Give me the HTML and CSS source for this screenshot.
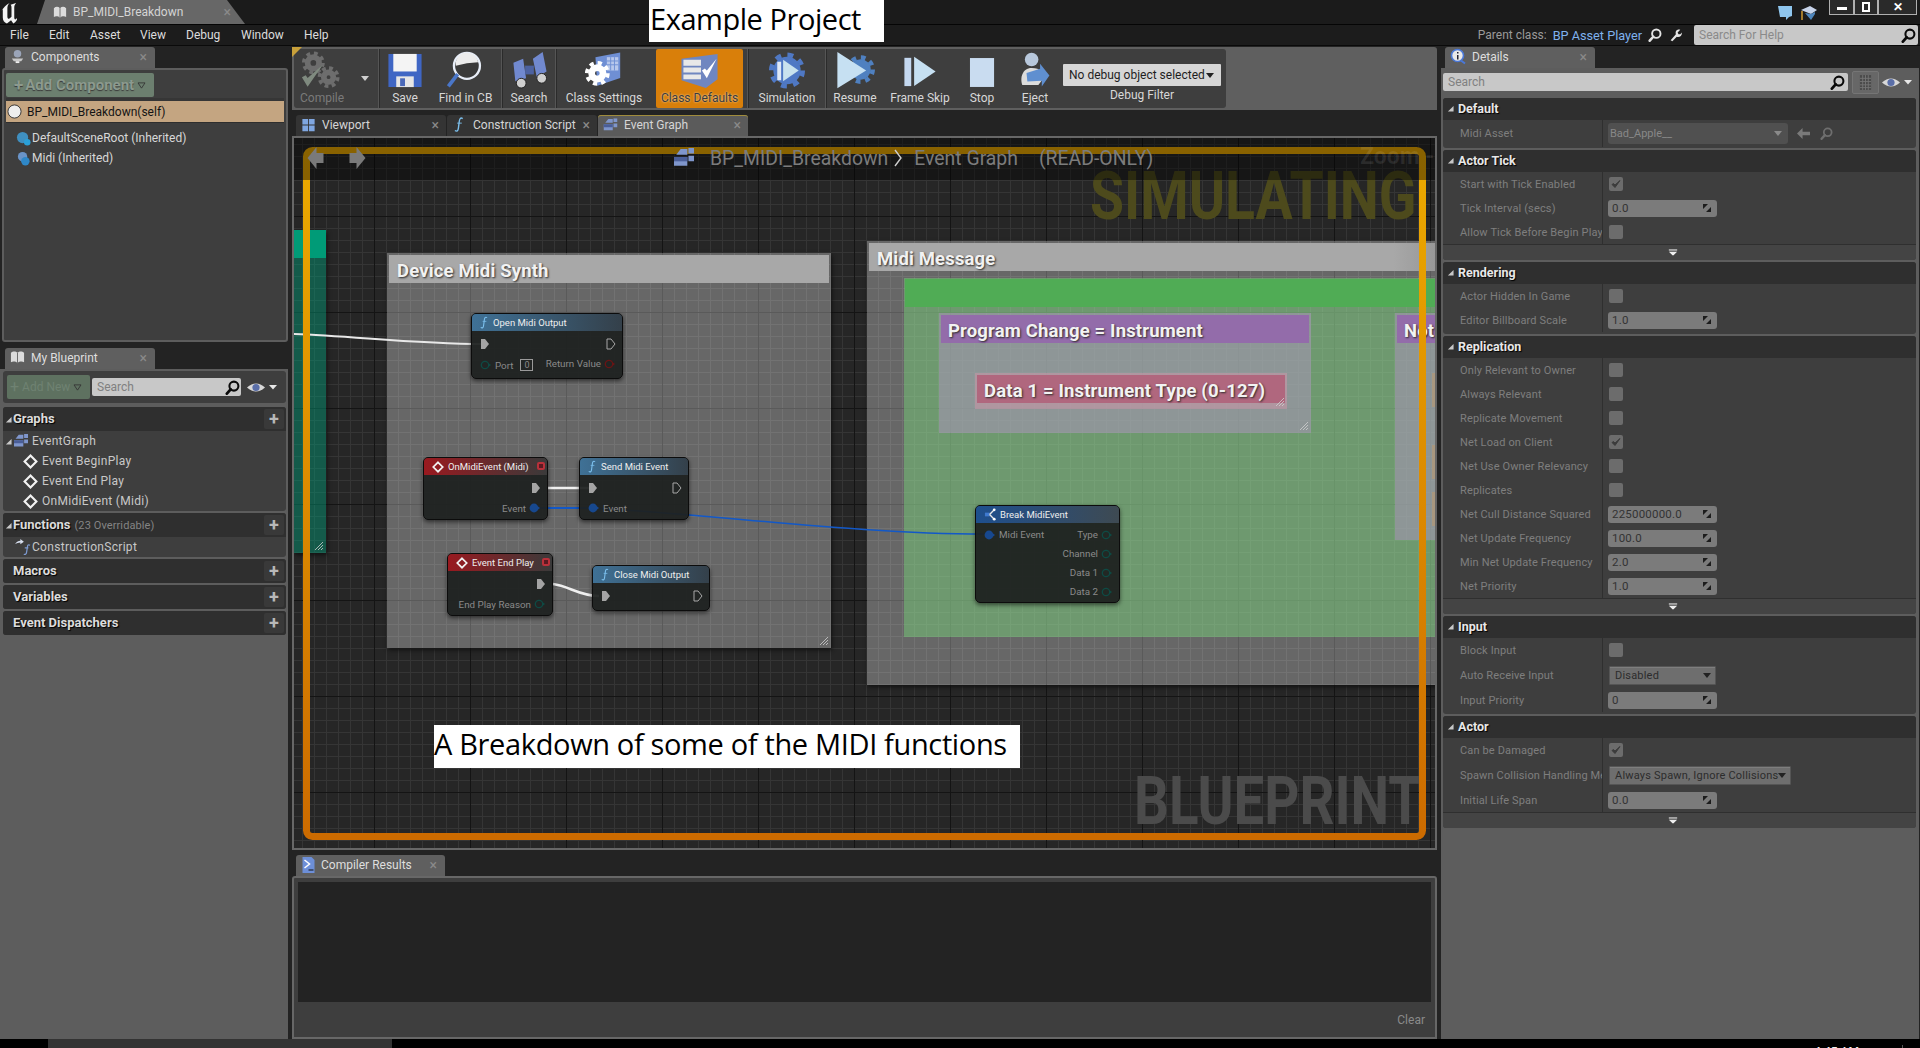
FILE: index.html
```html
<!DOCTYPE html>
<html lang="en">
<head>
<meta charset="utf-8">
<title>BP_MIDI_Breakdown</title>
<link rel="stylesheet" href="styles.css">
</head>
<body>
<svg class="defs" width="0" height="0">
  <defs>
    <linearGradient id="frame-grad" x1="0" y1="0" x2="0" y2="1"><stop offset="0" stop-color="#ecaa00"/><stop offset="1" stop-color="#cc6b00"/></linearGradient>
    <symbol id="mag" viewBox="0 0 16 16"><circle cx="9.500" cy="6.500" r="4.800" fill="none" stroke="currentColor" stroke-width="2.200"/><path d="M6 10 2 14.500" stroke="currentColor" stroke-width="3" stroke-linecap="round"/></symbol>
    <symbol id="spin" viewBox="0 0 8 8"><path d="M0 0h5L0 5zM8 8H3l5-5z" fill="#1c1c1c"/></symbol>
    <symbol id="expand" viewBox="0 0 12 8"><path d="M1 0h10v1.500H1zM1 3h10L6 8z" fill="#eee"/></symbol>
    <symbol id="tri" viewBox="0 0 8 8"><path d="M7.500 1v6.500H1z" fill="#c8c8c8"/></symbol>
    <symbol id="check" viewBox="0 0 14 14"><rect width="14" height="14" rx="2" fill="#6c6c6c"/><path d="m3 7.500 3 3 5-7-5 4.500-1.500-1.500z" fill="#3c3c3c" stroke="#3c3c3c"/></symbol>
    <symbol id="eye" viewBox="0 0 30 13"><path d="M0 6.500q9-8 18 0-9 8-18 0z" fill="#d8d8d8"/><circle cx="9" cy="6.500" r="3.600" fill="#5a6ea8"/><path d="m22 4h8l-4 4.500z" fill="#e8e8e8"/></symbol>
    <symbol id="diamond" viewBox="0 0 14 14"><path d="M7 1.500 12.500 7 7 12.500 1.500 7z" fill="none" stroke="#f2f2f2" stroke-width="2"/></symbol>
    <symbol id="func" viewBox="0 0 12 18"><path d="M9.500 2.500C7 1 6 3 5.700 6L4.800 13C4.500 16 3 17 1 15.500" fill="none" stroke="#7cc0ee" stroke-width="1.500"/><path d="M3.500 7.500h5" stroke="#7cc0ee"/></symbol>
    <symbol id="exec-in" viewBox="0 0 10 12"><path d="M1 1h4l4 5-4 5H1z" fill="#a4a4a4"/></symbol>
    <symbol id="exec-out" viewBox="0 0 10 12"><path d="M1 1h4l4 5-4 5H1z" fill="none" stroke="#a8a8a8"/></symbol>
    <symbol id="pin-teal" viewBox="0 0 12 10"><circle cx="5" cy="5" r="3.700" fill="none" stroke="#0e4a44" stroke-width="1.300"/><path d="m9 3.500 2 1.500-2 1.500z" fill="#0e4a44"/></symbol>
    <symbol id="pin-red" viewBox="0 0 12 10"><circle cx="5" cy="5" r="3.700" fill="none" stroke="#6a1414" stroke-width="1.300"/><path d="m9 3.500 2 1.500-2 1.500z" fill="#6a1414"/></symbol>
    <symbol id="pin-blue" viewBox="0 0 12 10"><circle cx="5" cy="5" r="4.400" fill="#17488e"/><path d="m9 3.500 2 1.500-2 1.500z" fill="#17488e"/></symbol>
    <symbol id="grid4" viewBox="0 0 20 18"><path d="M7 1h6v5H3zM14 0h5v5h-5zM14 7h5v5h-5zM1 8h12v8H1z" fill="#7f96cc"/><path d="M1 8h12v4H1z" fill="#4a5e98"/></symbol>
    <symbol id="hatch" viewBox="0 0 10 10"><path d="M1 9 9 1M4 9l5-5M7 9l2-2" stroke="#cfcfcf" stroke-width=".8" fill="none"/></symbol>
  </defs>
</svg>

<header class="title-bar">
  <svg class="ue-logo" viewBox="0 0 22 24"><path d="M0 10C2 6 5 3 9 1 7 3 6.500 4.500 6.500 7v9c0 2 1.500 3 3 1.500l1.500-1.500V7c0-2 0-3-1-4l6-2c-1.500 2-2 3-2 5.500V17c0 2 1 2.500 2 1.500l1-1c.5 2-1 4-4 6l-2.500-3.500L6 23.500C3 22.500 1.500 20 1.500 17V9C1.500 8 1 8.500 0 10z" fill="#f4f4f4"/></svg>
  <div class="doc-tab">
    <svg class="doc-icon" viewBox="0 0 16 14"><path d="M1 2c2-2 5-2 7 0 2-2 5-2 7 0v10c-2-1-5-1-7 1-2-2-5-2-7-1z" fill="#dcdcdc"/><path d="M8 2v11" stroke="#666"/></svg>
    <span class="doc-name">BP_MIDI_Breakdown</span>
    <span class="close">×</span>
  </div>
  <div class="title-right">
    <svg class="tr-chat" viewBox="0 0 16 16"><path d="M1 1h14v10l-3 1-3 3v-3H3z" fill="#8fc6ee"/></svg>
    <svg class="tr-cap" viewBox="0 0 16 16"><path d="M0 5 9 1l7 4-6 4z" fill="#c8d4ea"/><path d="M4 8l6 7 4-6v-2l-4 2z" fill="#4f86bc"/><path d="M1 6v9" stroke="#d09a30" stroke-width="1.500"/></svg>
    <div class="win-btns">
      <span class="win-btn win-min"><i></i></span>
      <span class="win-btn win-max"><i></i></span>
      <span class="win-btn win-close">✕</span>
    </div>
  </div>
</header>

<nav class="menu-bar">
  <div class="menu">
    <span>File</span><span>Edit</span><span>Asset</span><span>View</span><span>Debug</span><span>Window</span><span>Help</span>
  </div>
  <div class="menu-right">
    <span class="parent-label">Parent class:</span>
    <span class="parent-link">BP Asset Player</span>
    <svg class="mr-icon" viewBox="0 0 16 16"><use href="#mag"/></svg>
    <svg class="mr-icon" viewBox="0 0 16 16"><path d="M3 14 9 7c-1-3 1-6 5-5l-3 3 1 2 2 0 2-2c0 4-3 6-6 5l-5 5z" fill="#e4e4e4"/></svg>
    <div class="help-search"><span>Search For Help</span><svg viewBox="0 0 16 16"><use href="#mag"/></svg></div>
  </div>
</nav>

<div class="overlay-title">Example Project</div>

<main class="main">
  <section class="col-left">
    <div class="tab-row"><div class="tab">
      <svg class="tab-icon" viewBox="0 0 16 16"><circle cx="8" cy="5" r="4" fill="#9aa4b8"/><path d="M2 10h12l-2 3H4z" fill="#c8c8c8"/><path d="M6 13h4v2H6z" fill="#eee"/></svg>
      <span class="tab-name">Components</span><span class="close">×</span></div></div>
    <div class="components-panel">
      <div class="add-row"><div class="add-btn"><span class="plus">+</span>Add Component<svg class="caret" viewBox="0 0 10 8"><path d="M1 1h8L5 7z" fill="none" stroke="#333"/></svg></div></div>
      <div class="self-row"><svg class="sphere" viewBox="0 0 16 16"><circle cx="8" cy="8" r="7" fill="#eee" stroke="#333"/></svg>BP_MIDI_Breakdown(self)</div>
      <div class="comp-row"><svg viewBox="0 0 16 16"><circle cx="7" cy="7" r="6" fill="#3f8fc0"/><circle cx="12" cy="12" r="3.500" fill="#2aa0d8"/></svg>DefaultSceneRoot (Inherited)</div>
      <div class="comp-row"><svg viewBox="0 0 16 16"><circle cx="7" cy="6" r="5" fill="#6a94c8"/><circle cx="10" cy="11" r="4.500" fill="#2f88c8"/></svg>Midi (Inherited)</div>
    </div>
    <div class="tab-row tab-row-bp"><div class="tab">
      <svg class="tab-icon" viewBox="0 0 16 14"><path d="M1 2c2-2 5-2 7 0 2-2 5-2 7 0v10c-2-1-5-1-7 1-2-2-5-2-7-1z" fill="#dcdcdc"/><path d="M8 2v11" stroke="#666"/></svg>
      <span class="tab-name">My Blueprint</span><span class="close">×</span></div></div>
    <div class="bp-panel">
      <div class="bp-tools">
        <div class="add-new"><span class="plus">+</span>Add New<svg class="caret" viewBox="0 0 10 8"><path d="M1 1h8L5 7z" fill="none" stroke="#333"/></svg></div>
        <div class="bp-search"><span>Search</span><svg viewBox="0 0 16 16"><use href="#mag"/></svg></div>
        <svg class="eye" viewBox="0 0 30 13"><use href="#eye"/></svg>
      </div>
      <div class="bp-section">
        <div class="bp-head"><svg class="tri" viewBox="0 0 8 8"><use href="#tri"/></svg><b>Graphs</b><span class="add-sq">+</span></div>
        <div class="bp-row"><svg class="tri tri-row" viewBox="0 0 8 8"><use href="#tri"/></svg><svg class="row-ic" viewBox="0 0 20 18"><use href="#grid4"/></svg>EventGraph</div>
        <div class="bp-row bp-sub"><svg class="row-d" viewBox="0 0 14 14"><use href="#diamond"/></svg>Event BeginPlay</div>
        <div class="bp-row bp-sub"><svg class="row-d" viewBox="0 0 14 14"><use href="#diamond"/></svg>Event End Play</div>
        <div class="bp-row bp-sub"><svg class="row-d" viewBox="0 0 14 14"><use href="#diamond"/></svg>OnMidiEvent (Midi)</div>
      </div>
      <div class="bp-section">
        <div class="bp-head"><svg class="tri" viewBox="0 0 8 8"><use href="#tri"/></svg><b>Functions</b><small>(23 Overridable)</small><span class="add-sq">+</span></div>
        <div class="bp-row"><svg class="row-fn" viewBox="0 0 20 18"><path d="M1 6c2-3 4-4 6-4V0l4 3-4 3V4C5 4 3 5 1 6z" fill="#d8e0f0"/><path d="M18 7c-2-1-3 0-3 2l-1 6c0 2-2 3-3 2M12 10h4" stroke="#7d9ad0" stroke-width="1.400" fill="none"/></svg>ConstructionScript</div>
      </div>
      <div class="bp-section"><div class="bp-head bp-head-flat"><b>Macros</b><span class="add-sq">+</span></div></div>
      <div class="bp-section"><div class="bp-head bp-head-flat"><b>Variables</b><span class="add-sq">+</span></div></div>
      <div class="bp-section"><div class="bp-head bp-head-flat"><b>Event Dispatchers</b><span class="add-sq">+</span></div></div>
    </div>
  </section>

  <section class="col-center">
    <div class="toolbar">
      <div class="toolbar-inner">
        <div class="tool tool-compile">
          <svg class="ic" viewBox="0 0 42 40">
            <circle cx="14" cy="12" r="6" fill="none" stroke="#6d6d6d" stroke-width="6"/><circle cx="14" cy="12" r="10" fill="none" stroke="#6d6d6d" stroke-width="4" stroke-dasharray="4 3.900"/>
            <circle cx="30" cy="27" r="5" fill="none" stroke="#6d6d6d" stroke-width="6"/><circle cx="30" cy="27" r="9.500" fill="none" stroke="#6d6d6d" stroke-width="4" stroke-dasharray="4 3.500"/>
            <path d="m2 27 6 10L24 14l-16 14-2-3z" fill="#7f8a7f"/>
          </svg>
          <span class="tool-label">Compile</span>
          <svg class="tool-arrow" viewBox="0 0 10 6"><path d="M0 0h10L5 6z" fill="#cfcfcf"/></svg>
        </div>
        <span class="sep"></span>
        <div class="tool tool-save">
          <svg class="ic" viewBox="0 0 38 40"><path d="M2 3h34v34H2z" fill="#3f66c4"/><path d="M7 3h24v18H7z" fill="#f4f4f4"/><path d="M10 26h18v11H10z" fill="#e6e6e6"/><path d="M14 28h5v8h-5z" fill="#4a68b8"/></svg>
          <span class="tool-label">Save</span>
        </div>
        <div class="tool tool-find">
          <svg class="ic" viewBox="0 0 42 42"><circle cx="22" cy="16" r="14" fill="#3a3a3a" stroke="#e8eef8" stroke-width="2.500"/><path d="M10 16a12 12 0 0 1 24-4q-12 0-24 4z" fill="#ececec"/><path d="M12 25 2 38" stroke="#4a76c8" stroke-width="4"/></svg>
          <span class="tool-label">Find in CB</span>
        </div>
        <span class="sep"></span>
        <div class="tool tool-search">
          <svg class="ic" viewBox="0 0 40 40"><path d="M4 12 14 8l3 20-11 3zM24 8l10-7 4 20-10 6z" fill="#7189cf"/><path d="M16 15h9v9h-9z" fill="#4d62a0"/><circle cx="12" cy="33" r="5" fill="#cfcfcf" stroke="#222"/><circle cx="33" cy="28" r="5" fill="#cfcfcf" stroke="#222"/></svg>
          <span class="tool-label">Search</span>
        </div>
        <span class="sep"></span>
        <div class="tool tool-settings">
          <svg class="ic" viewBox="0 0 42 40"><path d="M12 6 38 1v27l-24 8z" fill="#6f8fd4"/><path d="M24 6h12v14H24z" fill="#b8c8ec"/><path d="M24 10h12M24 14h12M28 6v14M32 6v14" stroke="#6f8fd4"/><circle cx="14" cy="23" r="6" fill="none" stroke="#fff" stroke-width="7"/><circle cx="14" cy="23" r="11" fill="none" stroke="#fff" stroke-width="4" stroke-dasharray="4.500 4.140"/></svg>
          <span class="tool-label">Class Settings</span>
        </div>
        <div class="tool tool-defaults">
          <svg class="ic" viewBox="0 0 40 40"><path d="M1 8 38 3v26L26 38 1 30z" fill="#6f86c0"/><path d="M3 9h18v6H3zM3 17h18v5H3zM3 24h18v5H3z" fill="#e8e8e8"/><path d="m22 20 5 8L37 8l-10 12-2-2z" fill="#fff"/></svg>
          <span class="tool-label">Class Defaults</span>
        </div>
        <span class="sep"></span>
        <div class="tool tool-sim">
          <svg class="ic" viewBox="0 0 40 40"><circle cx="20" cy="20" r="14" fill="#4f78c4"/><circle cx="20" cy="20" r="16" fill="none" stroke="#4f78c4" stroke-width="5" stroke-dasharray="6 6.560"/><path d="M10 11h4v19h-4z" fill="#dfe8f6"/><path d="m16 9 16 11-16 11z" fill="#c9e2ee"/></svg>
          <span class="tool-label">Simulation</span>
        </div>
        <span class="sep"></span>
        <div class="tool tool-resume">
          <svg class="ic" viewBox="0 0 42 42"><circle cx="27" cy="20" r="11" fill="#4f80c0"/><circle cx="27" cy="20" r="13" fill="none" stroke="#4f80c0" stroke-width="5" stroke-dasharray="5 5.200"/><path d="m2 1 31 20L2 40z" fill="#c6e0f2"/></svg>
          <span class="tool-label">Resume</span>
        </div>
        <div class="tool tool-skip">
          <svg class="ic" viewBox="0 0 38 40"><path d="M3 7h7v29H3z" fill="#c4d8f0"/><path d="m13 6 22 15-22 15z" fill="#c6e0f2"/></svg>
          <span class="tool-label">Frame Skip</span>
        </div>
        <div class="tool tool-stop">
          <svg class="ic ic-stop" viewBox="0 0 28 32"><path d="M1 1h25v30H1z" fill="#c9dcf0"/></svg>
          <span class="tool-label">Stop</span>
        </div>
        <div class="tool tool-eject">
          <svg class="ic" viewBox="0 0 36 46"><circle cx="14" cy="10" r="8" fill="#b8c8dc"/><path d="M3 40c-3-8 0-20 11-20s14 6 14 12l-6 8z" fill="#dcdcdc"/><path d="M8 26 24 21v-6l11 14-9 13v-7l-17 1z" fill="#5f8fd0"/></svg>
          <span class="tool-label">Eject</span>
        </div>
        <div class="debug-block">
          <div class="debug-combo"><span>No debug object selected</span><svg viewBox="0 0 10 6"><path d="M0 0h10L5 6z" fill="#222"/></svg></div>
          <span class="tool-label">Debug Filter</span>
        </div>
      </div>
    </div>

    <div class="graph-tabs">
      <div class="gtab"><svg class="gtab-ic" viewBox="0 0 16 16"><path d="M1 1h6.500v6.500H1zM8.500 1H15v6.500H8.500zM1 8.500h6.500V15H1zM8.500 8.500H15V15H8.500z" fill="#7fa6e0"/></svg><span class="gtab-name">Viewport</span><span class="close">×</span></div>
      <div class="gtab"><svg class="gtab-ic gtab-f" viewBox="0 0 12 18"><use href="#func"/></svg><span class="gtab-name">Construction Script</span><span class="close">×</span></div>
      <div class="gtab gtab-on"><svg class="gtab-ic" viewBox="0 0 20 18"><use href="#grid4"/></svg><span class="gtab-name">Event Graph</span><span class="close">×</span></div>
    </div>

    <div class="graph">
      <div class="canvas">
        <div class="cm cm-teal"><div class="cm-head"></div><svg class="hatch" viewBox="0 0 10 10"><use href="#hatch"/></svg></div>
        <div class="cm cm-device"><div class="cm-head">Device Midi Synth</div><svg class="hatch" viewBox="0 0 10 10"><use href="#hatch"/></svg></div>
        <div class="cm cm-midi"><div class="cm-head">Midi Message</div></div>
        <div class="cm cm-green"><div class="cm-head"></div></div>
        <div class="cm cm-prog"><div class="cm-head">Program Change = Instrument</div><svg class="hatch" viewBox="0 0 10 10"><use href="#hatch"/></svg></div>
        <div class="cm cm-data"><div class="cm-head">Data 1 = Instrument Type (0-127)</div><svg class="hatch" viewBox="0 0 10 10"><use href="#hatch"/></svg></div>
        <div class="cm cm-note"><div class="cm-head">Not</div></div>
        <div class="cm-sliver sl-1"></div><div class="cm-sliver sl-2"></div><div class="cm-sliver sl-3"></div>

        <svg class="wires" viewBox="0 0 1141 710">
          <path d="M0 196C60 198 120 206 189 206" stroke="#e8e8e8" stroke-width="2" fill="none"/>
          <path d="M254 350H296" stroke="#f0f0f0" stroke-width="2.500" fill="none"/>
          <path d="M259 446C275 448 285 458 305 458" stroke="#f0f0f0" stroke-width="2.500" fill="none"/>
          <path d="M246 370H296" stroke="#1258c8" stroke-width="2" fill="none"/>
          <path d="M296 370C420 376 560 396 690 396" stroke="#1258c8" stroke-width="1.500" fill="none"/>
        </svg>

        <div class="node n-open">
          <div class="node-head h-fn"><svg class="h-f" viewBox="0 0 12 18"><use href="#func"/></svg>Open Midi Output</div>
          <div class="node-row"><svg class="exec" viewBox="0 0 10 12"><use href="#exec-in"/></svg><svg class="exec" viewBox="0 0 10 12"><use href="#exec-out"/></svg></div>
          <div class="node-row row-open2"><span class="pin-l"><svg class="pin" viewBox="0 0 12 10"><use href="#pin-teal"/></svg>Port<span class="port">0</span></span><span class="pin-r pin-up">Return Value<svg class="pin" viewBox="0 0 12 10"><use href="#pin-red"/></svg></span></div>
        </div>
        <div class="node n-onmidi">
          <div class="node-head h-ev"><svg class="h-d" viewBox="0 0 14 14"><use href="#diamond"/></svg>OnMidiEvent (Midi)<i class="stop-dot"></i></div>
          <div class="node-row row-end"><svg class="exec" viewBox="0 0 10 12"><use href="#exec-in"/></svg></div>
          <div class="node-row row-end"><span class="pin-r">Event<svg class="pin" viewBox="0 0 12 10"><use href="#pin-blue"/></svg></span></div>
        </div>
        <div class="node n-send">
          <div class="node-head h-fn"><svg class="h-f" viewBox="0 0 12 18"><use href="#func"/></svg>Send Midi Event</div>
          <div class="node-row"><svg class="exec" viewBox="0 0 10 12"><use href="#exec-in"/></svg><svg class="exec" viewBox="0 0 10 12"><use href="#exec-out"/></svg></div>
          <div class="node-row"><span class="pin-l"><svg class="pin" viewBox="0 0 12 10"><use href="#pin-blue"/></svg>Event</span></div>
        </div>
        <div class="node n-end">
          <div class="node-head h-ev"><svg class="h-d" viewBox="0 0 14 14"><use href="#diamond"/></svg>Event End Play<i class="stop-dot"></i></div>
          <div class="node-row row-end"><svg class="exec" viewBox="0 0 10 12"><use href="#exec-in"/></svg></div>
          <div class="node-row row-end"><span class="pin-r">End Play Reason<svg class="pin" viewBox="0 0 12 10"><use href="#pin-teal"/></svg></span></div>
        </div>
        <div class="node n-close">
          <div class="node-head h-fn"><svg class="h-f" viewBox="0 0 12 18"><use href="#func"/></svg>Close Midi Output</div>
          <div class="node-row"><svg class="exec" viewBox="0 0 10 12"><use href="#exec-in"/></svg><svg class="exec" viewBox="0 0 10 12"><use href="#exec-out"/></svg></div>
        </div>
        <div class="node n-break">
          <div class="node-head h-br"><svg class="h-b" viewBox="0 0 14 14"><path d="M1 5h5v4H1z" fill="#3f7ad0"/><path d="M6 7l5-5M6 7l5 5" stroke="#e8e8e8" stroke-width="1.500"/><circle cx="11" cy="2" r="1.500" fill="#fff"/><circle cx="11" cy="12" r="1.500" fill="#fff"/></svg>Break MidiEvent</div>
          <div class="node-row row-tight"><span class="pin-l"><svg class="pin" viewBox="0 0 12 10"><use href="#pin-blue"/></svg>Midi Event</span><span class="pin-r">Type<svg class="pin" viewBox="0 0 12 10"><use href="#pin-teal"/></svg></span></div>
          <div class="node-row row-tight row-end"><span class="pin-r">Channel<svg class="pin" viewBox="0 0 12 10"><use href="#pin-teal"/></svg></span></div>
          <div class="node-row row-tight row-end"><span class="pin-r">Data 1<svg class="pin" viewBox="0 0 12 10"><use href="#pin-teal"/></svg></span></div>
          <div class="node-row row-tight row-end"><span class="pin-r">Data 2<svg class="pin" viewBox="0 0 12 10"><use href="#pin-teal"/></svg></span></div>
        </div>

        <div class="wm wm-sim">SIMULATING</div>
        <div class="wm wm-bp">BLUEPRINT</div>
        <svg class="frame" viewBox="0 0 1141 710"><rect x="12.500" y="12.500" width="1116" height="686" rx="6" fill="none" stroke="url(#frame-grad)" stroke-width="7"/></svg>
        <div class="graph-band"></div>
        <div class="wm-zoom">Zoom -2</div>
        <svg class="nav nav-back" viewBox="0 0 16 22"><path d="M0 11 9 0v6h7v10H9v6z" fill="#7a7a7a"/></svg>
        <svg class="nav nav-fwd" viewBox="0 0 16 22"><path d="M16 11 7 0v6H0v10h7v6z" fill="#7a7a7a"/></svg>
        <div class="crumb">
          <svg class="crumb-ic" viewBox="0 0 20 18"><use href="#grid4"/></svg>
          <span class="crumb-bp">BP_MIDI_Breakdown</span>
          <svg class="crumb-chev" viewBox="0 0 8 18"><path d="M1 1 7 9l-6 8" fill="none" stroke="#cfcfcf" stroke-width="1.400"/></svg>
          <span class="crumb-ev">Event Graph</span>
          <span class="crumb-ro">(READ-ONLY)</span>
        </div>
        <div class="overlay-note">A Breakdown of some of the MIDI functions</div>
      </div>
    </div>

    <div class="compile-tabs"><div class="tab tab-compile">
      <svg class="tab-icon" viewBox="0 0 12 16"><path d="M0 0h9l3 3v13H0z" fill="#6d8fd8"/><path d="m2 3 5 4-5 4" fill="none" stroke="#fff" stroke-width="1.500"/><path d="M6 13h5" stroke="#111"/></svg>
      <span class="tab-name">Compiler Results</span><span class="close">×</span></div></div>
    <div class="compile-panel">
      <div class="compile-log"></div>
      <div class="compile-foot">Clear</div>
    </div>
  </section>

  <aside class="col-right">
    <div class="tab-row tab-row-details"><div class="tab">
      <svg class="tab-icon tab-icon-info" viewBox="0 0 16 16"><circle cx="7.500" cy="7" r="6" fill="#e8e8e8" stroke="#4a78d8" stroke-width="1.600"/><path d="M7 3.500h1.500v1.500H7zM7 6.500h1.500V11H7z" fill="#223"/><path d="m11 12 4 3" stroke="#4a78d8" stroke-width="2"/></svg>
      <span class="tab-name">Details</span><span class="close">×</span></div></div>
    <div class="details">
      <div class="details-tools">
        <div class="details-search"><span>Search</span><svg viewBox="0 0 16 16"><use href="#mag"/></svg></div>
        <div class="grid-btn"><svg viewBox="0 0 14 18"><path d="M1 1h12v16H1z" fill="#4a4a4a"/><path d="M1 4.500h12M1 8h12M1 11.500h12M1 14.500h12M4 1v16M7 1v16M10 1v16" stroke="#757575"/></svg></div>
        <svg class="eye" viewBox="0 0 30 13"><use href="#eye"/></svg>
      </div>

      <div class="d-section">
        <div class="d-head"><svg class="tri" viewBox="0 0 8 8"><use href="#tri"/></svg>Default</div>
        <div class="d-row d-row-asset"><span class="d-label">Midi Asset</span><div class="d-val">
          <div class="asset-combo"><span>Bad_Apple__</span><svg viewBox="0 0 10 6"><path d="M0 0h10L5 6z" fill="#8a8a8a"/></svg></div>
          <svg class="asset-ic" viewBox="0 0 14 14"><path d="M0 7 6 1v4h8v4H6v4z" fill="#7a7a7a"/></svg>
          <svg class="asset-ic asset-mag" viewBox="0 0 16 16"><use href="#mag"/></svg>
        </div></div>
      </div>

      <div class="d-section">
        <div class="d-head"><svg class="tri" viewBox="0 0 8 8"><use href="#tri"/></svg>Actor Tick</div>
        <div class="d-row"><span class="d-label">Start with Tick Enabled</span><div class="d-val"><svg class="cb" viewBox="0 0 14 14"><use href="#check"/></svg></div></div>
        <div class="d-row"><span class="d-label">Tick Interval (secs)</span><div class="d-val"><div class="num"><span>0.0</span><svg viewBox="0 0 8 8"><use href="#spin"/></svg></div></div></div>
        <div class="d-row"><span class="d-label">Allow Tick Before Begin Play</span><div class="d-val"><i class="cb-empty"></i></div></div>
        <div class="d-more"><svg viewBox="0 0 12 8"><use href="#expand"/></svg></div>
      </div>

      <div class="d-section">
        <div class="d-head"><svg class="tri" viewBox="0 0 8 8"><use href="#tri"/></svg>Rendering</div>
        <div class="d-row"><span class="d-label">Actor Hidden In Game</span><div class="d-val"><i class="cb-empty"></i></div></div>
        <div class="d-row"><span class="d-label">Editor Billboard Scale</span><div class="d-val"><div class="num"><span>1.0</span><svg viewBox="0 0 8 8"><use href="#spin"/></svg></div></div></div>
        <div class="d-pad"></div>
      </div>

      <div class="d-section">
        <div class="d-head"><svg class="tri" viewBox="0 0 8 8"><use href="#tri"/></svg>Replication</div>
        <div class="d-row"><span class="d-label">Only Relevant to Owner</span><div class="d-val"><i class="cb-empty"></i></div></div>
        <div class="d-row"><span class="d-label">Always Relevant</span><div class="d-val"><i class="cb-empty"></i></div></div>
        <div class="d-row"><span class="d-label">Replicate Movement</span><div class="d-val"><i class="cb-empty"></i></div></div>
        <div class="d-row"><span class="d-label">Net Load on Client</span><div class="d-val"><svg class="cb" viewBox="0 0 14 14"><use href="#check"/></svg></div></div>
        <div class="d-row"><span class="d-label">Net Use Owner Relevancy</span><div class="d-val"><i class="cb-empty"></i></div></div>
        <div class="d-row"><span class="d-label">Replicates</span><div class="d-val"><i class="cb-empty"></i></div></div>
        <div class="d-row"><span class="d-label">Net Cull Distance Squared</span><div class="d-val"><div class="num"><span>225000000.0</span><svg viewBox="0 0 8 8"><use href="#spin"/></svg></div></div></div>
        <div class="d-row"><span class="d-label">Net Update Frequency</span><div class="d-val"><div class="num"><span>100.0</span><svg viewBox="0 0 8 8"><use href="#spin"/></svg></div></div></div>
        <div class="d-row"><span class="d-label">Min Net Update Frequency</span><div class="d-val"><div class="num"><span>2.0</span><svg viewBox="0 0 8 8"><use href="#spin"/></svg></div></div></div>
        <div class="d-row"><span class="d-label">Net Priority</span><div class="d-val"><div class="num"><span>1.0</span><svg viewBox="0 0 8 8"><use href="#spin"/></svg></div></div></div>
        <div class="d-more"><svg viewBox="0 0 12 8"><use href="#expand"/></svg></div>
      </div>

      <div class="d-section">
        <div class="d-head"><svg class="tri" viewBox="0 0 8 8"><use href="#tri"/></svg>Input</div>
        <div class="d-row"><span class="d-label">Block Input</span><div class="d-val"><i class="cb-empty"></i></div></div>
        <div class="d-row d-row-tall"><span class="d-label">Auto Receive Input</span><div class="d-val"><div class="select select-short"><span>Disabled</span><svg viewBox="0 0 10 6"><path d="M0 0h10L5 6z" fill="#222"/></svg></div></div></div>
        <div class="d-row"><span class="d-label">Input Priority</span><div class="d-val"><div class="num"><span>0</span><svg viewBox="0 0 8 8"><use href="#spin"/></svg></div></div></div>
        <div class="d-pad"></div>
      </div>

      <div class="d-section">
        <div class="d-head"><svg class="tri" viewBox="0 0 8 8"><use href="#tri"/></svg>Actor</div>
        <div class="d-row"><span class="d-label">Can be Damaged</span><div class="d-val"><svg class="cb" viewBox="0 0 14 14"><use href="#check"/></svg></div></div>
        <div class="d-row d-row-tall"><span class="d-label">Spawn Collision Handling Method</span><div class="d-val"><div class="select select-long"><span>Always Spawn, Ignore Collisions</span><svg viewBox="0 0 10 6"><path d="M0 0h10L5 6z" fill="#222"/></svg></div></div></div>
        <div class="d-row"><span class="d-label">Initial Life Span</span><div class="d-val"><div class="num"><span>0.0</span><svg viewBox="0 0 8 8"><use href="#spin"/></svg></div></div></div>
        <div class="d-more"><svg viewBox="0 0 12 8"><use href="#expand"/></svg></div>
      </div>
    </div>
  </aside>
</main>

<footer class="status">
  <div class="status-left"></div>
  <div class="status-clock">4:45 AM</div>
</footer>
</body>
</html>
```
FILE: styles.css
```css
* { box-sizing: border-box; }
html, body { margin: 0; padding: 0; }
body {
  position: relative;
  width: 1920px; height: 1048px; overflow: hidden;
  background: #232323; color: #ddd;
  font-family: Roboto, "Liberation Sans", sans-serif; font-size: 12px;
}
.defs { position: absolute; }
svg { display: block; flex: none; }

/* title + menu */
.title-bar {
  height: 25px; display: flex; align-items: flex-start;
  background: #1b1b1b; border-bottom: 1px solid #050505; position: relative;
}
.ue-logo { width: 21px; height: 22px; margin: 2px 0 0 1px; }
.doc-tab {
  width: 208px; height: 24px; margin: 0 0 0 15px; padding: 0 14px 0 16px;
  display: flex; align-items: center;
  background: #676767;
  clip-path: polygon(0 100%, 8px 0, 190px 0, 100% 100%);
}
.doc-icon { width: 14px; height: 13px; }
.doc-name { margin-left: 6px; flex: 1; font-size: 12px; color: #d4d4d4; }
.close { color: #8a8a8a; font-size: 14px; line-height: 1; }
.title-right { margin-left: auto; display: flex; align-items: flex-start; }
.tr-chat { width: 16px; height: 16px; margin: 5px 8px 0 0; }
.tr-cap { width: 16px; height: 16px; margin: 5px 12px 0 0; }
.win-btns { display: flex; margin-right: 3px; }
.win-btn {
  height: 15px; border: 1px solid #b0b0b0; border-top: 0; background: #2a2a2a;
  display: flex; align-items: center; justify-content: center;
  color: #fff; font-size: 12px; font-weight: 700;
}
.win-min { width: 25px; }
.win-min i { width: 10px; height: 3px; background: #fff; margin-top: 3px; }
.win-max { width: 24px; }
.win-max i { width: 8px; height: 10px; border: 2px solid #fff; }
.win-close { width: 39px; }

.menu-bar {
  height: 21px; display: flex; align-items: center; justify-content: space-between;
  background: #1c1c1c; border-bottom: 1px solid #0a0a0a;
}
.menu { display: flex; padding-left: 10px; font-size: 12px; color: #dcdcdc; }
.menu span:nth-child(1) { width: 39px; }
.menu span:nth-child(2) { width: 41px; }
.menu span:nth-child(3) { width: 50px; }
.menu span:nth-child(4) { width: 46px; }
.menu span:nth-child(5) { width: 55px; }
.menu span:nth-child(6) { width: 63px; }
.menu-right { display: flex; align-items: center; }
.parent-label { color: #9a9a9a; margin-right: 6px; }
.parent-link { color: #7fb2ee; margin-right: 6px; font-size: 12.700px; }
.mr-icon { width: 14px; height: 14px; margin-right: 6px; color: #e4e4e4; }
.help-search {
  width: 224px; height: 20px; margin: 0 2px 0 6px; padding: 0 2px 0 5px;
  display: flex; align-items: center; justify-content: space-between;
  background: #c8c8c8; border-radius: 2px; color: #8a8a8a;
}
.help-search svg { width: 15px; height: 15px; color: #0a0a0a; }

.overlay-title {
  position: absolute; left: 649px; top: 0; width: 235px; height: 42px;
  background: #fff; color: #000; padding-left: 1px;
  font-family: "Open Sans", sans-serif; font-size: 29px; line-height: 38px; letter-spacing: -.45px; white-space: nowrap;
}

/* main grid */
.main {
  height: 993px; padding-top: 1px;
  display: grid; grid-template-columns: 288px 1145px 478px; column-gap: 4px;
}
.col-left, .col-center, .col-right { display: flex; flex-direction: column; min-height: 0; }

.tab-row { height: 21px; padding-left: 5px; flex: none; }
.tab {
  width: 150px; height: 21px; padding: 0 8px 2px 5px;
  display: flex; align-items: center;
  background: #5f5f5f; border-radius: 3px 3px 0 0;
}
.tab-icon { width: 15px; height: 15px; }
.tab-name { flex: 1; margin-left: 6px; color: #dedede; font-size: 12px; }
.components-panel {
  height: 274px; margin-left: 2px; padding: 3px 2px 0;
  background: #3e3e3e; border: 2px solid #5d5d5d; border-radius: 3px;
}
.add-row { height: 28px; margin: 0 -2px; background: #3e3e3e; padding-left: 2px; }
.add-btn {
  width: 148px; height: 24px; display: flex; align-items: center; padding-left: 8px;
  background: #6c7f6f; border-radius: 2px;
  font-size: 15px; font-weight: 700; color: #8c9a8e; text-shadow: 0 1px 1px #3a3a3a; white-space: nowrap;
}
.plus { margin-right: 2px; font-size: 17px; line-height: 1; }
.caret { width: 9px; height: 7px; margin-left: 3px; }
.self-row {
  height: 21px; margin: 0 0 6px; padding-left: 1px; display: flex; align-items: center;
  background: #c4a581; color: #141414; font-size: 12px;
  box-shadow: 0 1px 0 #2e2e2e, 0 -3px 0 #363636;
}
.sphere { width: 15px; height: 15px; margin-right: 5px; }
.comp-row { height: 20px; padding-left: 10px; display: flex; align-items: center; color: #d8d8d8; font-size: 12px; }
.comp-row svg { width: 15px; height: 15px; margin-right: 1px; }

.tab-row-bp { margin-top: 6px; }
.bp-panel { flex: 1; padding: 2px 2px 0 3px; background: #5d5d5d; display: flex; flex-direction: column; gap: 2px; }
.bp-tools {
  height: 32px; margin-bottom: 2px; padding-left: 4px;
  display: flex; align-items: center; background: #3e3e3e; border-radius: 3px;
}
.add-new {
  width: 83px; height: 24px; padding-left: 3px; display: flex; align-items: center;
  background: #5e7160; border-radius: 2px; color: #6f8272; font-size: 12px;
}
.add-new .plus { font-size: 16px; margin-right: 3px; }
.bp-search {
  width: 149px; height: 18px; margin-left: 2px; padding: 0 1px 0 5px;
  display: flex; align-items: center; justify-content: space-between;
  background: #c8c8c8; border-radius: 2px; color: #808080;
}
.bp-search svg { width: 15px; height: 15px; color: #0a0a0a; }
.eye { width: 30px; height: 13px; margin-left: 6px; }
.bp-section { background: #3e3e3e; border-radius: 3px; overflow: hidden; }
.bp-head {
  height: 24px; padding-left: 2px; display: flex; align-items: center;
  background: #2f2f2f; color: #dcdcdc; position: relative;
}
.bp-head-flat { padding-left: 10px; }
.bp-head b { font-weight: 700; font-size: 13px; margin-bottom: 2px; text-shadow: 1px 1px 1px #000; }
.bp-head small { font-size: 11px; color: #848484; margin-left: 4px; letter-spacing: .1px; }
.tri { width: 7px; height: 7px; margin-right: 1px; }
.add-sq {
  width: 20px; height: 20px; margin-left: auto; margin-right: 2px; border-radius: 2px;
  background: #393939; color: #b8b8b8; font-size: 18px; font-weight: 700; line-height: 19px; text-align: center;
}
.bp-row { height: 20px; padding-left: 13px; display: flex; align-items: center; color: #c8c8c8; font-size: 12px; letter-spacing: .3px; }
.bp-row:has(.tri-row) { padding-left: 2px; }
.tri-row { margin-right: 1px; }
.row-ic { width: 16px; height: 14px; margin-right: 3px; }
.bp-sub { padding-left: 20px; }
.row-d { width: 15px; height: 15px; margin-right: 4px; }
.row-fn { width: 18px; height: 16px; margin-right: 0; margin-left: -2px; }

/* toolbar */
.toolbar { height: 63px; flex: none; padding: 2px 0 2px 2px; background: #5f5f5f; border-radius: 3px 3px 0 0; position: relative; }
.toolbar::before { content: ""; position: absolute; left: 0; top: 0; border: 5px solid; border-color: #c8a03a transparent transparent #c8a03a; }
.toolbar-inner { width: 932px; height: 59px; display: flex; background: #3e3e3e; border-radius: 3px; }
.tool {
  height: 59px; flex: none; position: relative;
  display: flex; flex-direction: column; align-items: center; justify-content: space-between;
  padding: 2px 0 3px;
}
.tool-label { font-size: 12px; line-height: 14px; color: #d8d8d8; white-space: nowrap; }
.ic { height: 39px; width: 40px; }
.ic-stop { height: 31px; width: 27px; margin-top: 6px; }
.sep { width: 2px; height: 59px; background: #555; border-right: 1px solid #2b2b2b; flex: none; }
.tool-compile { width: 84px; align-items: flex-start; padding-left: 6px; }
.tool-compile .tool-label { color: #7a7a7a; }
.tool-arrow { position: absolute; left: 67px; top: 27px; width: 8px; height: 5px; }
.tool-save { width: 50px; }
.tool-find { width: 71px; }
.tool-search { width: 52px; }
.tool-settings { width: 94px; }
.tool-defaults { width: 87px; margin: 0 4px 0 5px; background: #d97f0a; border-radius: 2px; }
.tool-defaults .tool-label { color: #3a3a3a; text-shadow: 0 0 2px #f4e4cc; }
.tool-sim { width: 76px; }
.tool-resume { width: 56px; }
.tool-skip { width: 74px; }
.tool-stop { width: 50px; }
.tool-eject { width: 56px; }
.debug-block { width: 158px; flex: none; display: flex; flex-direction: column; align-items: center; padding-top: 15px; gap: 2px; }
.debug-combo {
  width: 158px; height: 22px; padding: 0 7px 0 6px;
  display: flex; align-items: center; justify-content: space-between;
  background: #d6d6d6; color: #1e1e1e; border-radius: 1px; font-size: 12px;
}
.debug-combo svg { width: 8px; height: 5px; }

.graph-tabs { height: 21px; margin-top: 5px; padding-left: 4px; display: flex; gap: 1px; flex: none; }
.gtab {
  width: 150px; height: 21px; padding: 0 7px 2px 5px; display: flex; align-items: center;
  background: #343434; border-radius: 3px 3px 0 0;
}
.gtab-on { background: #5b5b5b; box-shadow: inset 0 1px 0 #a08c3c; }
.gtab-ic { width: 15px; height: 14px; }
.gtab-f { width: 11px; height: 17px; margin-left: 2px; margin-right: 2px; }
.gtab-name { flex: 1; margin-left: 6px; font-size: 12px; color: #d6d6d6; white-space: nowrap; }

/* graph */
.graph { height: 714px; flex: none; border: 2px solid #676767; }
.canvas {
  position: relative; width: 1141px; height: 710px; overflow: hidden;
  background-color: #262626;
  background-image:
    linear-gradient(#141414 1px, transparent 1px),
    linear-gradient(90deg, #141414 1px, transparent 1px),
    linear-gradient(#353535 1px, transparent 1px),
    linear-gradient(90deg, #353535 1px, transparent 1px);
  background-size: 96px 96px, 96px 96px, 12px 12px, 12px 12px;
  background-position: 0 78px, 80px 0, 0 6px, 8px 0;
}
.graph-band { position: absolute; left: 0; top: 0; width: 100%; height: 42px; background: rgba(0,0,0,.42); }
.frame { position: absolute; left: 0; top: 0; width: 1141px; height: 710px; pointer-events: none; }
.wm { position: absolute; font-weight: 700; font-size: 66px; line-height: 66px; transform-origin: 0 50%; white-space: nowrap; }
.wm-sim { left: 796px; top: 26px; color: #4d4a1c; transform: scaleX(.838); }
.wm-bp { left: 840px; top: 631px; color: #4b4b4b; transform: scaleX(.828); }
.wm-zoom { position: absolute; left: 1066px; top: 6px; font-size: 23px; line-height: 26px; color: rgba(255,255,255,.09); font-weight: 700; white-space: nowrap; }
.nav { position: absolute; top: 9px; width: 17px; height: 22px; }
.nav-back { left: 13px; }
.nav-fwd { left: 55px; }
.crumb { position: absolute; left: 378px; top: 9px; height: 22px; display: flex; align-items: center; color: #7c7c7c; font-size: 19.400px; white-space: nowrap; }
.crumb-ic { width: 24px; height: 20px; margin-right: 14px; }
.crumb-chev { width: 8px; height: 18px; margin: 0 12px 0 6px; }
.crumb-ro { margin-left: 21px; }
.overlay-note {
  position: absolute; left: 140px; top: 587px; width: 586px; height: 43px;
  background: #fff; color: #000;
  font-family: "Open Sans", sans-serif; font-size: 29px; line-height: 38px; letter-spacing: -.35px; white-space: nowrap;
}

.cm { position: absolute; }
.cm-head {
  height: 28px; margin: 2px 2px 0; padding-left: 6px;
  color: #f2f2f2; font-weight: 700; font-size: 18.500px; letter-spacing: .15px; line-height: 33px; white-space: nowrap; text-shadow: 1px 1px 2px #2a2a2a;
}
.hatch { position: absolute; right: 2px; bottom: 2px; width: 10px; height: 10px; }
.cm-teal { left: 0; top: 92px; width: 32px; height: 323px; background: rgba(0,155,119,.45); box-shadow: 1px 2px 4px #111; }
.cm-teal .cm-head { margin: 0; background: #009b77; }
.cm-device { left: 93px; top: 115px; width: 444px; height: 395px; background: rgba(255,255,255,.3); box-shadow: 1px 2px 4px #111; }
.cm-device .cm-head { background: #a8a8a8; padding-left: 8px; }
.cm-midi { left: 573px; top: 103px; width: 600px; height: 444px; background: rgba(255,255,255,.3); box-shadow: 1px 2px 4px #111; }
.cm-midi .cm-head { background: linear-gradient(90deg, #a8a8a8 88%, #8c8c8c); padding-left: 8px; }
.cm-green { left: 610px; top: 140px; width: 600px; height: 359px; background: rgba(118,204,120,.5); }
.cm-green .cm-head { background: #50ac55; margin: 1px 1px 0; }
.cm-prog { left: 645px; top: 175px; width: 372px; height: 120px; background: rgba(173,148,192,.5); }
.cm-prog .cm-head, .cm-note .cm-head { background: #936caa; padding-left: 7px; }
.cm-data { left: 681px; top: 235px; width: 312px; height: 36px; background: rgba(210,150,170,.5); }
.cm-data .cm-head { background: #b0677e; padding-left: 7px; }
.cm-note { left: 1101px; top: 175px; width: 200px; height: 227px; background: rgba(173,148,192,.5); }
.cm-sliver { position: absolute; left: 1138px; width: 5px; height: 34px; background: #a8977f; }
.sl-1 { top: 235px; }
.sl-2 { top: 307px; }
.sl-3 { top: 354px; }

.wires { position: absolute; left: 0; top: 0; width: 1141px; height: 710px; }
.node {
  position: absolute; background: rgba(30,33,32,.94); border: 1px solid #0c0c0c; border-radius: 5px;
  box-shadow: 0 2px 4px rgba(0,0,0,.55); color: #8a8a8a; font-size: 9.800px;
}
.node-head {
  height: 17px; padding-left: 8px; display: flex; align-items: center;
  border-radius: 4px 4px 0 0; color: #eee; font-size: 9.500px; position: relative; white-space: nowrap;
}
.h-fn { background: linear-gradient(90deg, #3f7196, #34404a); }
.h-ev { background: linear-gradient(90deg, #99191f, #3a3a3a); }
.h-br { background: linear-gradient(90deg, #1e4f8e, #3e4a52); }
.h-f { width: 9px; height: 15px; margin-right: 4px; }
.h-d { width: 12px; height: 12px; margin-right: 4px; }
.h-b { width: 13px; height: 13px; margin-right: 3px; }
.stop-dot { position: absolute; right: 2px; top: 4px; width: 8px; height: 8px; border: 2px solid #b8303a; background: #5a1a22; border-radius: 2px; }
.node-row { height: 20px; padding: 0 6px 0 8px; display: flex; align-items: center; justify-content: space-between; margin-top: 3px; }
.node-row + .node-row { margin-top: 0; }
.row-open2 { margin-top: 1px !important; }
.pin-up { margin-top: -3px; }
.row-end { justify-content: flex-end; }
.row-tight { height: 19px; margin-top: 2px; }
.exec { width: 10px; height: 12px; }
.pin { width: 12px; height: 10px; }
.pin-l, .pin-r { display: flex; align-items: center; gap: 3px; white-space: nowrap; }
.port { margin-left: 4px; width: 13px; height: 12px; border: 1px solid #9a9a9a; line-height: 10px; text-align: center; font-size: 9px; }
.n-open { left: 177px; top: 175px; width: 152px; height: 66px; }
.n-onmidi { left: 129px; top: 319px; width: 125px; height: 63px; }
.n-send { left: 285px; top: 319px; width: 110px; height: 63px; }
.n-end { left: 153px; top: 415px; width: 106px; height: 63px; }
.n-close { left: 298px; top: 427px; width: 118px; height: 46px; }
.n-break { left: 681px; top: 367px; width: 145px; height: 98px; }

/* compile */
.compile-tabs { height: 21px; margin-top: 5px; padding-left: 4px; flex: none; }
.tab-compile { width: 149px; padding: 0 8px 2px 6px; }
.tab-compile .tab-icon { width: 13px; height: 16px; }
.compile-panel {
  height: 163px; flex: none; padding: 4px 4px 0;
  background: #3e3e3e; border: 2px solid #676767; border-radius: 3px 3px 0 0;
  display: flex; flex-direction: column;
}
.compile-log { height: 120px; background: #232323; flex: none; }
.compile-foot { flex: 1; display: flex; align-items: center; justify-content: flex-end; padding-right: 6px; color: #8a8a8a; font-size: 12px; }

/* details */
.tab-row-details { padding-left: 4px; }
.tab-row-details .tab-icon-info { width: 16px; height: 17px; }
.details { flex: 1; padding: 2px 3px 0 2px; background: #5d5d5d; display: flex; flex-direction: column; gap: 2px; }
.details-tools { height: 24px; margin-bottom: 2px; display: flex; align-items: center; }
.details-search {
  width: 405px; height: 18px; padding: 0 3px 0 5px;
  display: flex; align-items: center; justify-content: space-between;
  background: #c8c8c8; border-radius: 2px; color: #808080;
}
.details-search svg { width: 15px; height: 15px; color: #0a0a0a; }
.grid-btn { width: 27px; height: 23px; margin-left: 4px; display: flex; align-items: center; justify-content: center; background: #676767; border: 1px solid #757575; border-radius: 2px; }
.grid-btn svg { width: 13px; height: 17px; }
.details .eye { margin-left: 3px; }
.d-section { background: #3e3e3e; border-radius: 3px; overflow: hidden; }
.d-head {
  height: 22px; padding: 0 0 2px 4px; display: flex; align-items: center;
  background: #2f2f2f; color: #e8e8e8; font-weight: 700; font-size: 12.500px; text-shadow: 1px 1px 1px #000;
}
.d-head .tri { margin-right: 4px; }
.d-row { height: 24px; display: flex; align-items: center; }
.d-row-tall { height: 26px; }
.d-row-asset { height: 28px; padding-bottom: 1px; }
.d-label {
  width: 160px; height: 100%; padding-left: 17px; flex: none; overflow: hidden; white-space: nowrap;
  display: flex; align-items: center;
  border-right: 1px solid #2f2f2f; color: #7e7e7e; font-size: 11px; letter-spacing: .14px;
}
.d-val { padding-left: 5px; display: flex; align-items: center; }
.num {
  width: 109px; height: 17px; padding: 0 6px 0 4px; display: flex; align-items: center; justify-content: space-between;
  background: #7b7b7b; border-radius: 3px; color: #333; font-size: 11.500px; letter-spacing: .2px;
}
.num svg { width: 8px; height: 8px; }
.cb { width: 14px; height: 14px; margin-left: 1px; }
.cb-empty { display: block; width: 14px; height: 14px; margin-left: 1px; background: #6c6c6c; border-radius: 2px; }
.d-more { height: 16px; padding-right: 14px; display: flex; align-items: center; justify-content: center; border-top: 1px solid #2f2f2f; background: #444; }
.d-more svg { width: 10px; height: 7px; }
.d-pad { height: 2px; }
.asset-combo {
  width: 180px; height: 21px; padding: 0 6px 0 2px; display: flex; align-items: center; justify-content: space-between;
  background: #505050; border-radius: 3px; color: #888; font-size: 11px;
}
.asset-combo svg { width: 8px; height: 5px; }
.asset-ic { width: 13px; height: 13px; margin-left: 9px; }
.asset-mag { color: #6e6e6e; margin-left: 10px; }
.select {
  height: 19px; padding: 0 4px 0 5px; display: flex; align-items: center; justify-content: space-between;
  background: #6e6e6e; border: 1px solid #555; box-shadow: inset 0 1px 0 #7e7e7e; color: #2c2c2c; font-size: 11px; letter-spacing: .2px; border-radius: 1px; margin-left: 1px; white-space: nowrap;
}
.select svg { width: 8px; height: 5px; }
.select-short { width: 107px; }
.select-long { width: 182px; }

/* status */
.status { height: 9px; display: flex; background: #000; position: relative; overflow: hidden; }
.status-left { width: 344px; margin-left: 48px; background: #333; }
.status-clock { position: absolute; left: 1814px; top: 6px; color: #eee; font-size: 12px; font-weight: 500; width: 89px; border-right: 1px solid #555; height: 9px; }
```
